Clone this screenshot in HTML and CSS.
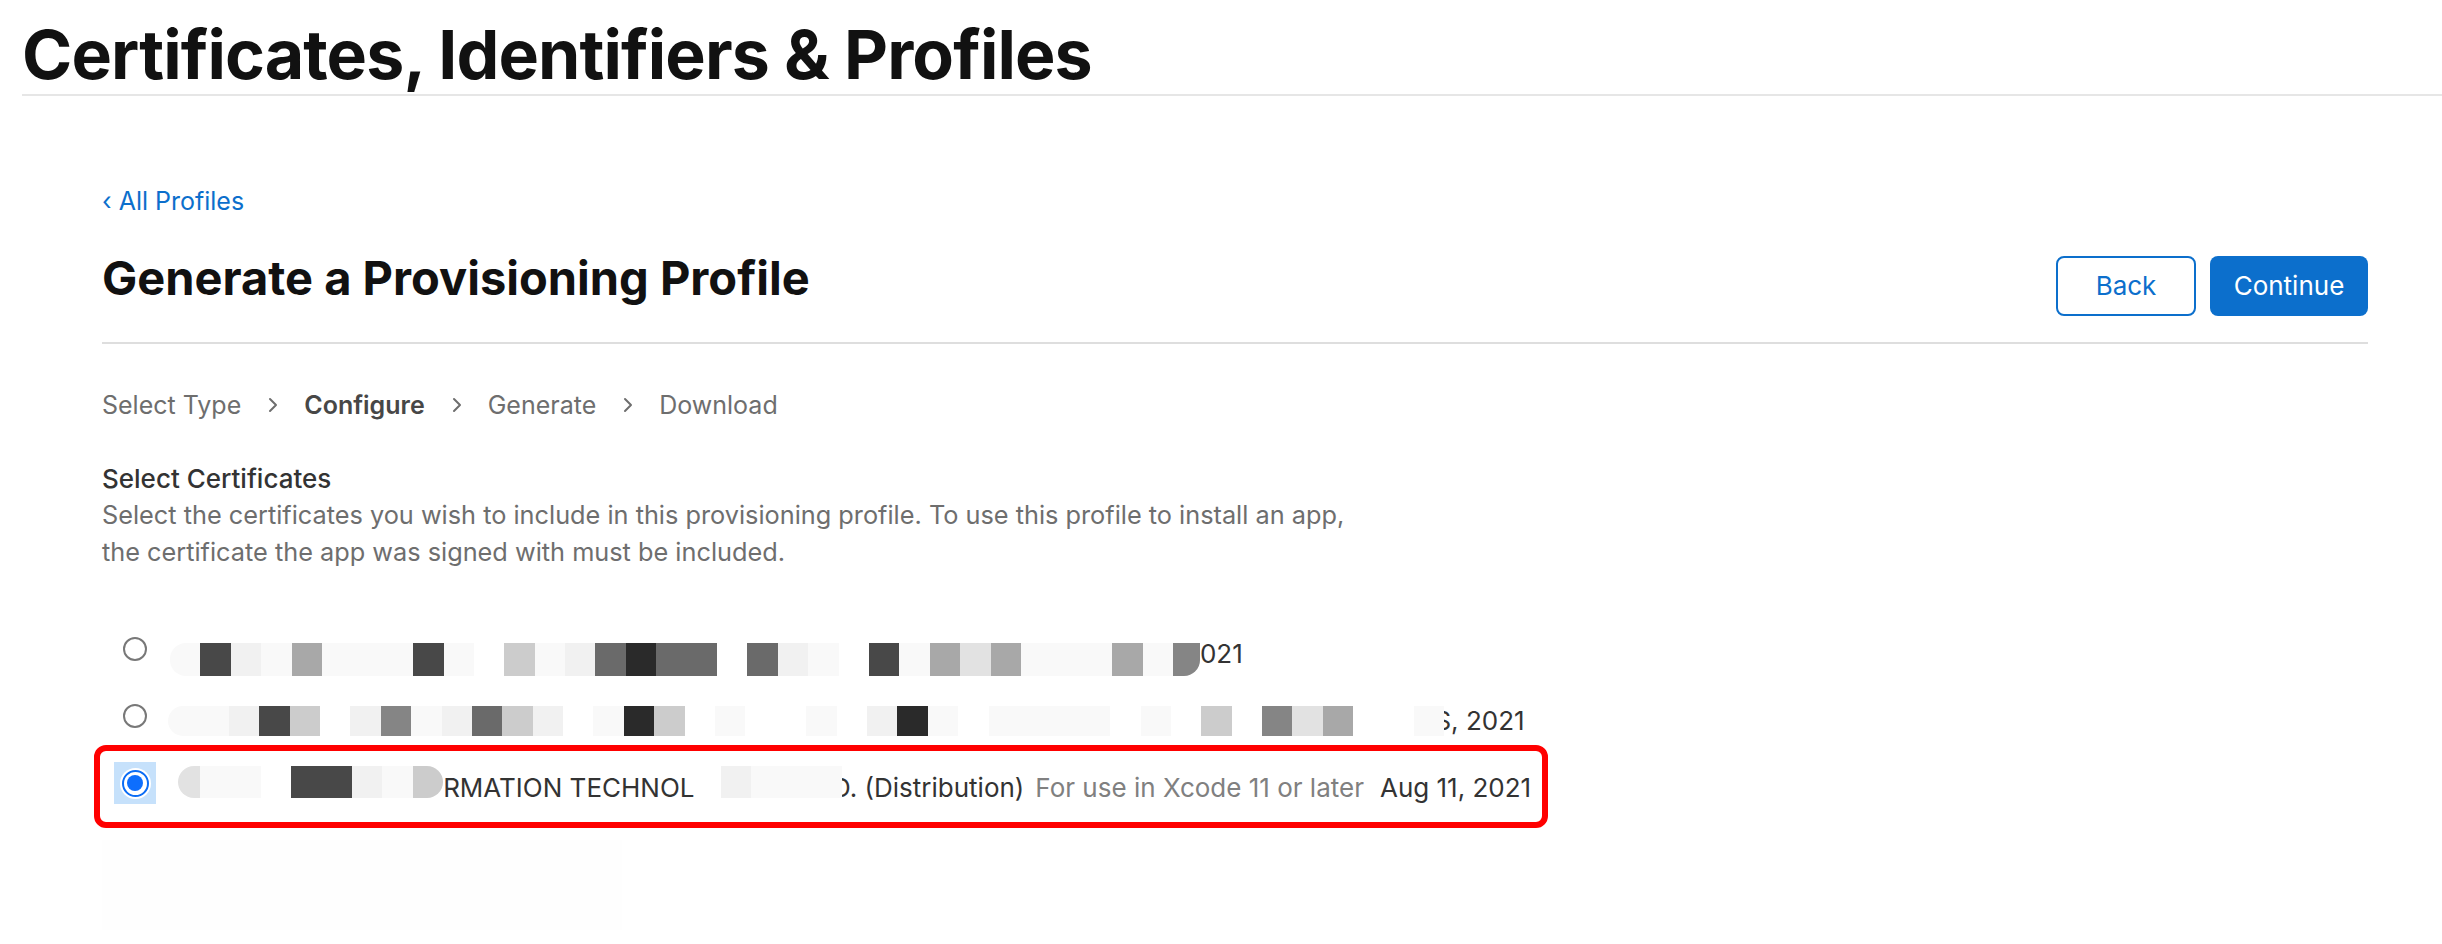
FILE: index.html
```html
<!DOCTYPE html>
<html lang="en">
<head>
<meta charset="utf-8">
<title>Certificates, Identifiers &amp; Profiles</title>
<link rel="stylesheet" href="styles.css">
</head>
<body>
<header class="page-header">
  <h1 class="page-title">Certificates, Identifiers &amp; Profiles</h1>
</header>
<main class="content">
  <a class="back-link" href="#">‹ All Profiles</a>
  <div class="head-row">
    <h2 class="head-title">Generate a Provisioning Profile</h2>
    <div class="actions">
      <button class="btn btn-secondary" type="button">Back</button>
      <button class="btn btn-primary" type="button">Continue</button>
    </div>
  </div>

  <nav class="steps">
    <span class="step">Select Type</span>
    <svg class="chev" width="11" height="16" viewBox="0 0 11 16"><polyline points="3,2 9,8 3,14" fill="none" stroke="#6e6e6e" stroke-width="2" stroke-linecap="round" stroke-linejoin="round"/></svg>
    <span class="step step-current">Configure</span>
    <svg class="chev" width="11" height="16" viewBox="0 0 11 16"><polyline points="3,2 9,8 3,14" fill="none" stroke="#6e6e6e" stroke-width="2" stroke-linecap="round" stroke-linejoin="round"/></svg>
    <span class="step">Generate</span>
    <svg class="chev" width="11" height="16" viewBox="0 0 11 16"><polyline points="3,2 9,8 3,14" fill="none" stroke="#6e6e6e" stroke-width="2" stroke-linecap="round" stroke-linejoin="round"/></svg>
    <span class="step">Download</span>
  </nav>

  <section class="certs">
    <h3 class="section-title">Select Certificates</h3>
    <p class="section-desc">Select the certificates you wish to include in this provisioning profile. To use this profile to install an app,<br>the certificate the app was signed with must be included.</p>

    <div class="cert-list">
      <div class="cert-row row-1">
        <span class="radio-cell"><span class="radio"></span></span>
        <span class="cert-name">
          <span class="mosaic mz-1"><i class="s1 rl"></i><i class="s8"></i><i class="s2"></i><i class="s1"></i><i class="s5"></i><i class="s1"></i><i class="s1"></i><i class="s1"></i><i class="s8"></i><i class="s1"></i><i class="s0"></i><i class="s4"></i><i class="s1"></i><i class="s2"></i><i class="s7"></i><i class="s9"></i><i class="s7"></i><i class="s7"></i><i class="s0"></i><i class="s7"></i><i class="s2"></i><i class="s1"></i><i class="s0"></i><i class="s8"></i><i class="s1"></i><i class="s5"></i><i class="s3"></i><i class="s5"></i><i class="s1"></i><i class="s1"></i><i class="s1"></i><i class="s5"></i><i class="s1"></i><i class="s6 rbr"></i></span>
          <span class="txt">021</span>
        </span>
      </div>

      <div class="cert-row row-2">
        <span class="radio-cell"><span class="radio"></span></span>
        <span class="cert-name">
          <span class="mosaic mz-2"><i class="s1 rl"></i><i class="s1"></i><i class="s2"></i><i class="s8"></i><i class="s4"></i><i class="s0"></i><i class="s2"></i><i class="s6"></i><i class="s1"></i><i class="s2"></i><i class="s7"></i><i class="s4"></i><i class="s2"></i><i class="s0"></i><i class="s1"></i><i class="s9"></i><i class="s4"></i><i class="s0"></i><i class="s1"></i><i class="s0"></i><i class="s0"></i><i class="s1"></i><i class="s0"></i><i class="s2"></i><i class="s9"></i><i class="s1"></i><i class="s0"></i><i class="s1"></i><i class="s1"></i><i class="s1"></i><i class="s1"></i><i class="s0"></i><i class="s1"></i><i class="s0"></i><i class="s4"></i><i class="s0"></i><i class="s6"></i><i class="s3"></i><i class="s5"></i><i class="s0"></i><i class="s0"></i><i class="s1"></i></span>
          <span class="txt txt-under">S, 2021</span>
        </span>
      </div>

      <div class="cert-row row-3 is-selected">
        <span class="radio-cell"><span class="radio-focus"><span class="radio-ring"><span class="radio-dot"></span></span></span></span>
        <span class="cert-name">
          <span class="mosaic mz-3"><i class="s3 rl narrow"></i><i class="s1"></i><i class="s1"></i><i class="s0"></i><i class="s8"></i><i class="s8"></i><i class="s2"></i><i class="s1"></i><i class="s4 rr"></i></span>
          <span class="txt">RMATION TECHNOL</span>
          <span class="mosaic mz-3 mz-gap"><i class="s2"></i><i class="s1"></i><i class="s1"></i><i class="s1"></i></span>
          <span class="txt txt-under2">D. (Distribution)</span>
          <span class="txt meta">For use in Xcode 11 or later</span>
          <span class="txt date">Aug 11, 2021</span>
        </span>
        <span class="annotation"></span>
      </div>

      <div class="ghost-row"></div>
    </div>
  </section>
</main>
</body>
</html>
```

FILE: styles.css
```css
html, body {
  margin: 0;
  padding: 0;
  background: #ffffff;
}

body {
  font-family: Inter, "Liberation Sans", "DejaVu Sans", sans-serif;
  color: #333333;
  overflow: hidden;
}

/* ---------- page header ---------- */
.page-header {
  margin-left: 22px;
  border-bottom: 2px solid #e6e6e6;
}

.page-title {
  margin: 0;
  padding-top: 15px;
  font-size: 68px;
  line-height: 79px;
  font-weight: 700;
  letter-spacing: -0.9px;
  color: #111111;
}

/* ---------- content ---------- */
.content {
  margin-left: 102px;
  width: 2266px;
}

.back-link {
  display: inline-block;
  margin-top: 90px;
  font-size: 25px;
  line-height: 30px;
  color: #0c6fcc;
  text-decoration: none;
}

.head-row {
  display: flex;
  justify-content: space-between;
  align-items: flex-start;
  margin-top: 40px;
  padding-bottom: 26px;
  border-bottom: 2px solid #dedede;
}

.head-title {
  margin: 0;
  font-size: 47px;
  line-height: 44px;
  font-weight: 700;
  letter-spacing: 0;
  color: #111111;
}

.actions {
  display: flex;
  gap: 14px;
}

.btn {
  box-sizing: border-box;
  height: 60px;
  border-radius: 8px;
  font-family: inherit;
  font-size: 26px;
  display: flex;
  align-items: center;
  justify-content: center;
  padding: 0 0 2px;
  cursor: pointer;
}

.btn-secondary {
  width: 140px;
  border: 2px solid #0c6fcc;
  background: #ffffff;
  color: #0c6fcc;
}

.btn-primary {
  width: 158px;
  border: 0;
  background: #0c6fcc;
  color: #ffffff;
}

/* ---------- steps ---------- */
.steps {
  display: flex;
  align-items: center;
  gap: 26px;
  margin-top: 46px;
  font-size: 25px;
  line-height: 30px;
  color: #6e6e6e;
}

.step-current {
  font-weight: 600;
  color: #474747;
}

.chev {
  display: block;
}

/* ---------- certificates ---------- */
.section-title {
  margin: 44px 0 0;
  font-size: 26px;
  line-height: 30px;
  font-weight: 500;
  color: #333333;
}

.section-desc {
  margin: 2px 0 0;
  font-size: 25.3px;
  line-height: 37px;
  color: #6e6e6e;
}

.cert-list {
  margin-top: 50px;
}

.cert-row {
  position: relative;
  display: flex;
  align-items: flex-start;
  height: 67px;
  font-size: 26px;
  line-height: 67px;
  color: #333333;
}

.radio-cell {
  width: 66px;
  height: 58px;
  flex: none;
  display: flex;
  align-items: center;
  justify-content: center;
}

.radio {
  box-sizing: border-box;
  width: 24px;
  height: 24px;
  border: 2px solid #787878;
  border-radius: 50%;
  background: #ffffff;
}

.radio-focus {
  width: 42px;
  height: 42px;
  background: #c6e1fb;
  display: flex;
  align-items: center;
  justify-content: center;
}

.radio-ring {
  box-sizing: border-box;
  width: 27px;
  height: 27px;
  border: 2px solid #0a6cf5;
  border-radius: 50%;
  background: #ffffff;
  display: flex;
  align-items: center;
  justify-content: center;
  box-shadow: 0 0 0 2px #ffffff;
}

.radio-dot {
  width: 16px;
  height: 16px;
  border-radius: 50%;
  background: #0d6efd;
}

.cert-name {
  display: flex;
  align-items: flex-start;
  white-space: nowrap;
}

.txt {
  display: block;
}

.txt-under {
  margin-left: -10px;
}

.txt-under2 {
  margin-left: -10px;
}

.meta {
  margin-left: 11px;
  color: #808080;
}

.date {
  margin-left: 16px;
}

/* pixelated redaction */
.mosaic {
  position: relative;
  z-index: 1;
  display: flex;
  flex: none;
}

.mosaic i {
  display: block;
  width: 30.4px;
  height: 100%;
}

.mz-1 {
  margin-left: 2px;
  margin-top: 23px;
  height: 33px;
}

.mz-2 {
  margin-top: 19px;
  height: 30px;
}

.mz-3 {
  margin-top: 12px;
  height: 32px;
}

.row-3 .cert-name {
  margin-left: 10px;
}

.mz-gap {
  margin-left: 26px;
}

.mosaic i.narrow {
  width: 22px;
}

.mosaic i.rl {
  border-radius: 16px 0 0 16px;
}

.mosaic i.rr {
  border-radius: 0 16px 16px 0;
}

.mosaic i.rbr {
  width: 27px;
  border-radius: 0 0 16px 0;
}

.s0 { background: #ffffff; }
.s1 { background: #f9f9f9; }
.s2 { background: #f1f1f1; }
.s3 { background: #e2e2e2; }
.s4 { background: #cccccc; }
.s5 { background: #a8a8a8; }
.s6 { background: #858585; }
.s7 { background: #6a6a6a; }
.s8 { background: #484848; }
.s9 { background: #2a2a2a; }

/* red annotation drawn over the selected row */
.annotation {
  position: absolute;
  top: -9px;
  left: -8px;
  box-sizing: border-box;
  width: 1454px;
  height: 83px;
  border: 6px solid #ff0000;
  border-radius: 12px;
  pointer-events: none;
}

.ghost-row {
  margin-top: 19px;
  width: 520px;
  height: 90px;
  background: #fefefe;
}
```
